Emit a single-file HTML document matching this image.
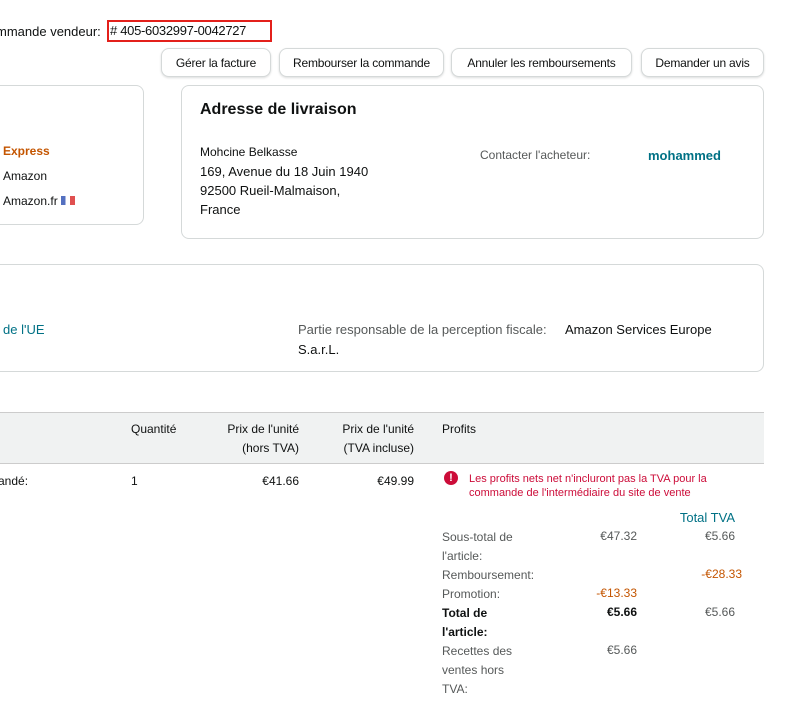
<!DOCTYPE html>
<html><head><meta charset="utf-8"><style>
body{margin:0;width:800px;height:710px;background:#fff;font-family:"Liberation Sans",sans-serif;color:#0f1111;position:relative;overflow:hidden;font-size:13px}
.a{position:absolute;white-space:nowrap}
.btn{position:absolute;top:48px;height:28px;border:1px solid #d5d9d9;border-radius:8px;box-shadow:0 1px 2px rgba(15,17,17,.15);font-size:12px;line-height:28px;text-align:center;background:#fff;letter-spacing:-0.2px;box-sizing:border-box;height:29px}
.card{position:absolute;border:1px solid #d5d9d9;border-radius:8px;box-sizing:border-box}
.r{text-align:right}
</style></head><body>
<div class="a" style="left:-4px;top:24px;font-size:13px">mmande vendeur: </div>
<div class="a" style="left:107px;top:20px;width:160px;height:18px;border:2px solid #e3201b;font-size:13px;line-height:18px;padding-left:1px;letter-spacing:-0.3px"># 405-6032997-0042727</div>
<div class="btn" style="left:161px;width:110px">Gérer la facture</div>
<div class="btn" style="left:279px;width:165px">Rembourser la commande</div>
<div class="btn" style="left:451px;width:181px">Annuler les remboursements</div>
<div class="btn" style="left:641px;width:123px">Demander un avis</div>

<div class="card" style="left:-10px;top:85px;width:154px;height:140px"></div>
<div class="a" style="left:3px;top:144px;color:#c45500;font-weight:bold;font-size:12px">Express</div>
<div class="a" style="left:3px;top:169px;font-size:12px">Amazon</div>
<div class="a" style="left:3px;top:194px;font-size:12px">Amazon.fr <span style="display:inline-block;width:14px;height:9px;background:linear-gradient(90deg,#5470c0 33%,#fff 33%,#fff 66%,#e05050 66%);vertical-align:0"></span></div>

<div class="card" style="left:181px;top:85px;width:583px;height:154px"></div>
<div class="a" style="left:200px;top:101px;font-size:16px;font-weight:bold">Adresse de livraison</div>
<div class="a" style="left:200px;top:145px;font-size:12px">Mohcine Belkasse</div>
<div class="a" style="left:200px;top:164px;font-size:13px">169, Avenue du 18 Juin 1940</div>
<div class="a" style="left:200px;top:183px;font-size:13px">92500 Rueil-Malmaison,</div>
<div class="a" style="left:200px;top:202px;font-size:13px">France</div>
<div class="a" style="left:480px;top:148px;font-size:12px;color:#565959">Contacter l'acheteur:</div>
<div class="a" style="left:648px;top:148px;font-size:13px;color:#007185;font-weight:bold">mohammed</div>

<div class="card" style="left:-10px;top:264px;width:774px;height:108px"></div>
<div class="a" style="left:3px;top:322px;color:#007185">de l'UE</div>
<div class="a" style="left:298px;top:322px;color:#565959">Partie responsable de la perception fiscale:</div>
<div class="a" style="left:565px;top:322px">Amazon Services Europe</div>
<div class="a" style="left:298px;top:342px">S.a.r.L.</div>

<div class="a" style="left:0;top:412px;width:764px;height:50px;background:#f0f2f2;border-top:1px solid #ccc;border-bottom:1px solid #ccc"></div>
<div class="a" style="left:131px;top:422px;font-size:12px">Quantité</div>
<div class="a r" style="left:200px;width:99px;top:420px;font-size:12px;line-height:19px">Prix de l'unité<br>(hors TVA)</div>
<div class="a r" style="left:315px;width:99px;top:420px;font-size:12px;line-height:19px">Prix de l'unité<br>(TVA incluse)</div>
<div class="a" style="left:442px;top:422px;font-size:12px">Profits</div>

<div class="a" style="left:-2px;top:474px;font-size:12px">andé:</div>
<div class="a" style="left:131px;top:474px;font-size:12px">1</div>
<div class="a r" style="left:200px;width:99px;top:474px;font-size:12px">€41.66</div>
<div class="a r" style="left:315px;width:99px;top:474px;font-size:12px">€49.99</div>
<div class="a" style="left:444px;top:471px;width:14px;height:14px;border-radius:50%;background:#cc0c39;color:#fff;font-size:11px;font-weight:bold;text-align:center;line-height:14px">!</div>
<div class="a" style="left:469px;top:472px;font-size:11px;color:#cc0c39;line-height:14px">Les profits nets net n'incluront pas la TVA pour la<br>commande de l'intermédiaire du site de vente</div>

<div class="a r" style="left:660px;width:75px;top:510px;color:#007185;font-size:13px">Total TVA</div>
<div style="position:absolute;left:442px;top:528px;font-size:12px;line-height:19px;color:#565959">
Sous-total de<br>l'article:<br>Remboursement:<br>Promotion:<br><b style="color:#0f1111">Total de<br>l'article:</b><br>Recettes des<br>ventes hors<br>TVA:</div>
<div class="a r" style="left:560px;width:77px;top:529px;font-size:12px;color:#565959">€47.32</div>
<div class="a r" style="left:660px;width:75px;top:529px;font-size:12px;color:#565959">€5.66</div>
<div class="a r" style="left:660px;width:82px;top:567px;font-size:12px;color:#c45500">-€28.33</div>
<div class="a r" style="left:560px;width:77px;top:586px;font-size:12px;color:#c45500">-€13.33</div>
<div class="a r" style="left:560px;width:77px;top:605px;font-size:12px;font-weight:bold">€5.66</div>
<div class="a r" style="left:660px;width:75px;top:605px;font-size:12px;color:#565959">€5.66</div>
<div class="a r" style="left:560px;width:77px;top:643px;font-size:12px;color:#565959">€5.66</div>
</body></html>
